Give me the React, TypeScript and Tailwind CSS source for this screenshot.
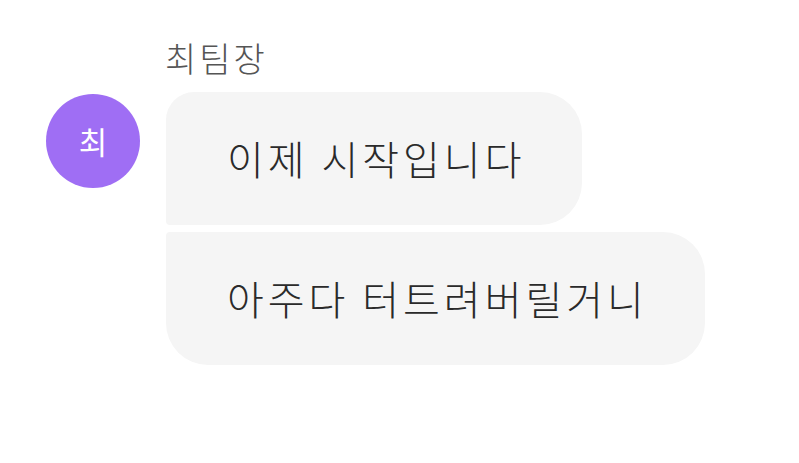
import React from "react";

const MESSAGES = [
  { id: 1, text: "이제 시작입니다", shape: "rounded-tl-[28px] rounded-tr-[42px] rounded-br-[42px] rounded-bl-[4px]" },
  { id: 2, text: "아주다 터트려버릴거니", shape: "rounded-tl-[4px] rounded-tr-[42px] rounded-br-[42px] rounded-bl-[42px]" },
];

const App = () => {
  return (
    <div className="w-[799px] h-[463px] bg-white font-['Noto_Sans_CJK_KR','Noto_Sans',sans-serif] pt-[34px] pl-[46px]">
      <div className="pl-[119px] text-[34px] leading-[48px] tracking-[3px] font-light text-[#555555]">최팀장</div>
      <div className="flex items-start gap-[26px] mt-[10px]">
        {/* avatar */}
        <div className="w-[94px] h-[94px] mt-[2px] rounded-full bg-[#9f6ef4] flex items-center justify-center text-white text-[31px] shrink-0">
          최
        </div>
        <div className="flex flex-col items-start gap-[7px]">
          {MESSAGES.map((m) => (
            <div
              key={m.id}
              className={"bg-[#f5f5f5] pl-[61px] pr-[57px] py-[36px] text-[40px] leading-[61px] tracking-[4px] font-light text-[#2a2a2a] " + m.shape}
            >
              {m.text}
            </div>
          ))}
        </div>
      </div>
    </div>
  );
};

export default App;
